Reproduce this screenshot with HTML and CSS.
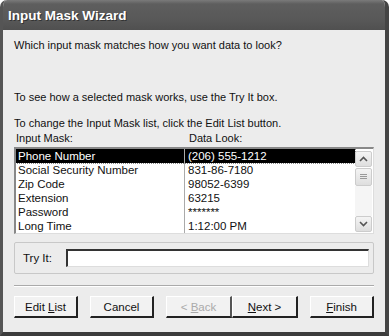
FILE: index.html
```html
<!DOCTYPE html>
<html lang="en">
<head>
  <meta charset="UTF-8">
  <title>Input Mask Wizard</title>
  <link rel="stylesheet" href="styles.css">
</head>
<body>
  <div class="window">
    <div class="titlebar">Input Mask Wizard</div>
    <div class="content">
      <p class="question">Which input mask matches how you want data to look?</p>
      <p class="hint">To see how a selected mask works, use the Try It box.</p>
      <p class="hint2">To change the Input Mask list, click the Edit List button.</p>

      <div class="headings">
        <span class="col1">Input Mask:</span>
        <span>Data Look:</span>
      </div>

      <div class="listbox">
        <div class="rows">
          <div class="row selected"><span class="col1">Phone Number</span><span class="col2">(206) 555-1212</span></div>
          <div class="row"><span class="col1">Social Security Number</span><span class="col2">831-86-7180</span></div>
          <div class="row"><span class="col1">Zip Code</span><span class="col2">98052-6399</span></div>
          <div class="row"><span class="col1">Extension</span><span class="col2">63215</span></div>
          <div class="row"><span class="col1">Password</span><span class="col2">*******</span></div>
          <div class="row"><span class="col1">Long Time</span><span class="col2">1:12:00 PM</span></div>
        </div>
        <div class="scrollbar">
          <div class="sb-btn">
            <svg width="9" height="6" viewBox="0 0 9 6"><path d="M1 5 L4.5 1.5 L8 5" fill="none" stroke="#555" stroke-width="1.6"/></svg>
          </div>
          <div class="sb-thumb">
            <svg width="7" height="6" viewBox="0 0 7 6"><path d="M0 0.5h7M0 2.5h7M0 4.5h7" stroke="#999" stroke-width="1"/></svg>
          </div>
          <div class="sb-track"></div>
          <div class="sb-btn">
            <svg width="9" height="6" viewBox="0 0 9 6"><path d="M1 1 L4.5 4.5 L8 1" fill="none" stroke="#555" stroke-width="1.6"/></svg>
          </div>
        </div>
      </div>

      <div class="tryit">
        <label>Try It:</label>
        <div class="tryit-input"></div>
      </div>

      <div class="separator"></div>

      <div class="buttons">
        <button class="btn">Edit <u>L</u>ist</button>
        <button class="btn">Cancel</button>
        <div class="pair">
          <button class="btn disabled">&lt; <u>B</u>ack</button>
          <button class="btn"><u>N</u>ext &gt;</button>
        </div>
        <button class="btn"><u>F</u>inish</button>
      </div>
    </div>
  </div>
</body>
</html>
```

FILE: styles.css
```css
body {
  margin: 0;
  background: #fff;
  font-family: "Liberation Sans", Arial, sans-serif;
  font-size: 11px;
  color: #111;
}
.window {
  width: 389px;
  height: 336px;
  box-sizing: border-box;
  background: #ececec;
  border-left: 3px solid #555;
  border-right: 4px solid #444;
  border-bottom: 4px solid #3c3c3c;
  border-radius: 7px 7px 0 0;
  display: flex;
  flex-direction: column;
  overflow: hidden;
}
.titlebar {
  height: 30px;
  margin: 0 -4px 0 -3px;
  padding-left: 8px;
  background: linear-gradient(#7a7a7a 0px, #5e5e5e 4px, #585858 20px, #505050 30px);
  color: #fff;
  font-weight: bold;
  font-size: 13.5px;
  line-height: 31px;
  text-shadow: 1px 1px 0 #333;
  border-radius: 7px 7px 0 0;
}
.content {
  padding: 0 11px 0 11px;
  display: flex;
  flex-direction: column;
}
.content p {
  margin: 0;
  line-height: 14px;
}
.question {
  margin-top: 8px !important;
}
.hint {
  margin-top: 38px !important;
}
.hint2 {
  margin-top: 12px !important;
}
.headings {
  display: flex;
  margin-top: 1px;
  padding-left: 2px;
  line-height: 14px;
}
.headings .col1 {
  width: 173px;
}
.listbox {
  margin-top: 2px;
  height: 87px;
  background: #fff;
  border-top: 2px solid #888;
  border-left: 2px solid #888;
  border-right: 1px solid #ddd;
  border-bottom: 1px solid #ddd;
  display: flex;
  box-sizing: border-box;
}
.rows {
  flex: 1;
}
.row {
  display: flex;
  height: 14px;
  line-height: 14px;
  font-size: 11.5px;
  white-space: nowrap;
}
.row .col1 {
  width: 166px;
  padding-left: 2px;
  border-right: 1px solid #aaa;
}
.row .col2 {
  padding-left: 3px;
}
.row.selected {
  background: #000;
  color: #fff;
  outline: 1px dotted #888;
}
.scrollbar {
  width: 17px;
  display: flex;
  flex-direction: column;
  padding: 2px 1px 1px 0;
}
.sb-btn, .sb-thumb {
  height: 16px;
  border: 1px solid #ccc;
  border-radius: 2px;
  background: linear-gradient(#f4f4f4, #dedede);
  display: flex;
  align-items: center;
  justify-content: center;
  box-sizing: border-box;
}
.sb-thumb {
  height: 18px;
  margin-top: 1px;
}
.sb-track {
  flex: 1;
  background: #f5f5f5;
}
.tryit {
  margin-top: 8px;
  height: 32px;
  box-sizing: border-box;
  border: 1px solid #c8c8c8;
  border-radius: 2px;
  display: flex;
  align-items: center;
  padding: 0 4px 0 8px;
}
.tryit label {
  width: 43px;
  font-size: 11.5px;
}
.tryit-input {
  flex: 1;
  height: 18px;
  box-sizing: border-box;
  background: #fff;
  border-top: 2px solid #333;
  border-left: 2px solid #333;
  border-right: 1px solid #ddd;
  border-bottom: 1px solid #ddd;
}
.separator {
  margin-top: 11px;
  border-top: 1px solid #aaa;
  border-bottom: 1px solid #fff;
}
.buttons {
  margin-top: 9px;
  display: flex;
  justify-content: space-between;
}
.pair {
  display: flex;
}
.btn {
  font-family: inherit;
  font-size: 11.5px;
  width: 64px;
  height: 22px;
  padding: 0;
  background: #f2f2f2;
  color: #111;
  border: 1px solid #fff;
  border-right: 2px solid #222;
  border-bottom: 2px solid #222;
  border-radius: 0;
}
.pair .btn {
  width: 66px;
}
.btn.disabled {
  color: #aaa;
  border-right-color: #555;
}
```
